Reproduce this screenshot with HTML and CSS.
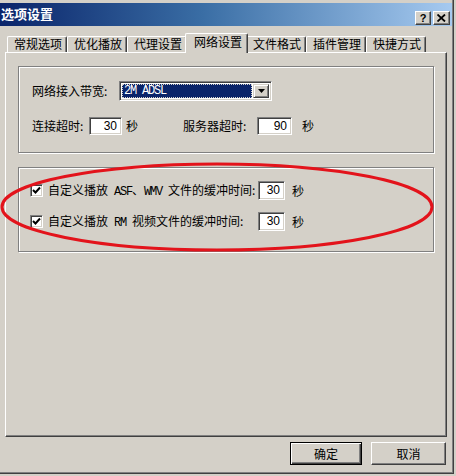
FILE: index.html
```html
<!DOCTYPE html>
<html>
<head>
<meta charset="utf-8">
<link rel="stylesheet" href="styles.css">
</head>
<body>
<div class="window">
  <div class="titlebar">
    <span class="title">选项设置</span>
    <div class="caption-btns">
      <span class="cbtn">?</span>
      <span class="cbtn cbtn-x"><svg width="9" height="8" viewBox="0 0 9 8"><path d="M0.5 0.5 L8 7.5 M8 0.5 L0.5 7.5" stroke="#000" stroke-width="1.8"/></svg></span>
    </div>
  </div>
  <div class="body">
    <div class="tabs">
      <div class="tab">常规选项</div>
      <div class="tab">优化播放</div>
      <div class="tab">代理设置</div>
      <div class="tab tab-active">网络设置</div>
      <div class="tab">文件格式</div>
      <div class="tab">插件管理</div>
      <div class="tab">快捷方式</div>
    </div>
    <div class="panel">
      <div class="group group1">
        <div class="row row-combo">
          <span class="lbl lbl-bw">网络接入带宽:</span>
          <div class="combo">
            <div class="combo-sel"><span class="mono">2M ADSL</span></div>
            <div class="combo-btn"><svg width="7" height="4" viewBox="0 0 7 4"><path d="M0 0 H7 L3.5 4 Z" fill="#000"/></svg></div>
          </div>
        </div>
        <div class="row row-timeout">
          <span class="lbl lbl-conn">连接超时:</span>
          <div class="input input-conn">30</div>
          <span class="unit unit-conn">秒</span>
          <span class="lbl lbl-srv">服务器超时:</span>
          <div class="input input-srv">90</div>
          <span class="unit unit-srv">秒</span>
        </div>
      </div>
      <div class="group group2">
        <div class="crow">
          <span class="check"><svg width="9" height="9" viewBox="0 0 9 9"><path d="M1 4 L3.5 6.5 L8 1.5" stroke="#000" stroke-width="2" fill="none"/></svg></span>
          <span class="clbl">自定义播放<span class="mono"> ASF</span>、<span class="mono">WMV </span>文件的缓冲时间:</span>
          <div class="input input-buf">30</div>
          <span class="unit">秒</span>
        </div>
        <div class="crow crow2">
          <span class="check"><svg width="9" height="9" viewBox="0 0 9 9"><path d="M1 4 L3.5 6.5 L8 1.5" stroke="#000" stroke-width="2" fill="none"/></svg></span>
          <span class="clbl">自定义播放<span class="mono"> RM </span>视频文件的缓冲时间:</span>
          <div class="input input-buf">30</div>
          <span class="unit">秒</span>
        </div>
      </div>
    </div>
    <div class="buttons">
      <div class="btn btn-default"><span>确定</span></div>
      <div class="btn btn-cancel"><span>取消</span></div>
    </div>
  </div>
  <svg class="ring" width="440" height="100" viewBox="0 0 440 100">
    <ellipse cx="217" cy="47" rx="215" ry="43" fill="none" stroke="#e3131b" stroke-width="3"/>
  </svg>
</div>
</body>
</html>
```
FILE: styles.css
```css
* { box-sizing: border-box; }
html, body {
  margin: 0;
  padding: 0;
  background: #d4d0c8;
}
body {
  width: 456px;
  height: 476px;
  overflow: hidden;
  font-family: "Noto Sans CJK SC", "Liberation Sans", sans-serif;
  font-size: 12px;
  color: #000;
}
.window {
  position: relative;
  width: 454px;
  height: 474px;
  padding-top: 3px;
  background: #d4d0c8;
  border-right: 1px solid #404040;
  border-bottom: 1px solid #404040;
  box-shadow: inset -1px -1px #808080;
  display: flex;
  flex-direction: column;
}
.titlebar {
  height: 23px;
  margin-right: 1px;
  background: linear-gradient(90deg, #0a246a 0%, #3a6ea5 45%, #a6caf0 100%);
  display: flex;
  align-items: center;
  justify-content: space-between;
  padding: 0 2px 0 1px;
}
.title {
  color: #fff;
  font-weight: bold;
  font-size: 13px;
  line-height: 13px;
  margin-top: -2px;
}
.caption-btns {
  display: flex;
  gap: 2px;
  align-self: flex-end;
  margin-bottom: 1px;
}
.cbtn {
  width: 16px;
  height: 14px;
  background: #d4d0c8;
  border-top: 1px solid #fff;
  border-left: 1px solid #fff;
  border-right: 1px solid #404040;
  border-bottom: 1px solid #404040;
  box-shadow: inset -1px -1px #808080;
  font-family: "Liberation Sans", sans-serif;
  font-weight: bold;
  font-size: 11px;
  line-height: 12px;
  text-align: center;
  display: flex;
  align-items: center;
  justify-content: center;
}
.cbtn-x { width: 17px; }
.body {
  flex: 1;
  padding: 7px 6px 0 5px;
  display: flex;
  flex-direction: column;
}
.tabs {
  height: 20px;
  display: flex;
  padding-left: 2px;
  position: relative;
  z-index: 2;
}
.tab {
  width: 60px;
  height: 16px;
  margin-top: 3px;
  border-top: 1px solid #fff;
  border-left: 1px solid #fff;
  border-right: 1px solid #404040;
  border-top-left-radius: 2px;
  border-top-right-radius: 2px;
  box-shadow: inset -1px 0 #808080;
  background: #d4d0c8;
  line-height: 14px;
  padding-left: 6px;
  white-space: nowrap;
}
.tab-active {
  width: 63px;
  height: 20px;
  margin: 0 -2px;
  padding-left: 8px;
  line-height: 16px;
  position: relative;
  z-index: 3;
}
.panel {
  height: 385px;
  margin-top: -1px;
  border-top: 1px solid #fff;
  border-left: 1px solid #fff;
  border-right: 1px solid #404040;
  border-bottom: 1px solid #404040;
  box-shadow: inset -1px -1px #808080;
  padding: 13px 12px 0 12px;
  display: flex;
  flex-direction: column;
}
.group {
  border: 1px solid #808080;
  box-shadow: inset 1px 1px #fff, 1px 1px #fff;
}
.group1 {
  height: 87px;
  padding: 14px 0 0 13px;
}
.group2 {
  height: 85px;
  margin-top: 14px;
  padding: 13px 0 0 11px;
}
.row {
  display: flex;
  align-items: center;
}
.row-combo { height: 20px; }
.row-timeout { height: 18px; margin-top: 16px; }
.lbl, .unit, .clbl { white-space: nowrap; line-height: 14px; }
.lbl-bw { width: 87px; }
.lbl-conn { width: 57px; }
.lbl-srv { width: 74px; margin-left: 45px; }
.unit-conn { margin-left: 4px; }
.unit-srv { margin-left: 10px; }
.mono {
  font-family: "Liberation Mono", monospace;
  font-size: 12px;
  letter-spacing: -1.2px;
}
.combo {
  width: 153px;
  height: 20px;
  background: #fff;
  border-top: 1px solid #808080;
  border-left: 1px solid #808080;
  border-right: 1px solid #fff;
  border-bottom: 1px solid #fff;
  box-shadow: inset 1px 1px #404040, inset -1px -1px #d4d0c8;
  padding: 2px;
  display: flex;
  gap: 1px;
}
.combo-sel {
  flex: 1;
  background: #0a246a;
  color: #fff;
  outline: 1px dotted #d4d0c8;
  outline-offset: -1px;
  padding-left: 2px;
  line-height: 14px;
  display: flex;
  align-items: center;
}
.combo-btn {
  width: 16px;
  background: #d4d0c8;
  border-top: 1px solid #d4d0c8;
  border-left: 1px solid #d4d0c8;
  border-right: 1px solid #404040;
  border-bottom: 1px solid #404040;
  box-shadow: inset 1px 1px #fff, inset -1px -1px #808080;
  display: flex;
  align-items: center;
  justify-content: center;
}
.input {
  height: 18px;
  background: #fff;
  border-top: 1px solid #808080;
  border-left: 1px solid #808080;
  border-right: 1px solid #fff;
  border-bottom: 1px solid #fff;
  box-shadow: inset 1px 1px #404040, inset -1px -1px #d4d0c8;
  font-family: "Liberation Sans", sans-serif;
  font-size: 12px;
  line-height: 16px;
  text-align: right;
  padding-right: 4px;
}
.input-conn { width: 33px; }
.input-srv { width: 35px; }
.input-buf { width: 27px; height: 19px; line-height: 17px; }
.crow {
  display: grid;
  grid-template-columns: 13px 215px 27px auto;
  align-items: center;
  height: 19px;
}
.crow2 { margin-top: 12px; }
.crow .unit { margin-left: 7px; }
.clbl { padding-left: 5px; }
.check {
  width: 13px;
  height: 13px;
  background: #fff;
  border-top: 1px solid #808080;
  border-left: 1px solid #808080;
  border-right: 1px solid #fff;
  border-bottom: 1px solid #fff;
  box-shadow: inset 1px 1px #404040, inset -1px -1px #d4d0c8;
  display: flex;
  align-items: center;
  justify-content: center;
}
.buttons {
  margin-top: 5px;
  display: flex;
  justify-content: flex-end;
  gap: 9px;
  padding-right: 1px;
}
.btn {
  height: 23px;
  background: #d4d0c8;
  border-top: 1px solid #fff;
  border-left: 1px solid #fff;
  border-right: 1px solid #404040;
  border-bottom: 1px solid #404040;
  box-shadow: inset -1px -1px #808080;
  display: flex;
  align-items: center;
  justify-content: center;
  line-height: 14px;
}
.btn-default {
  width: 72px;
  border: 1px solid #000;
  box-shadow: inset 1px 1px #fff, inset -1px -1px #404040, inset -2px -2px #808080;
}
.btn-cancel { width: 75px; }
.ring {
  position: absolute;
  left: 0;
  top: 160px;
}
```
